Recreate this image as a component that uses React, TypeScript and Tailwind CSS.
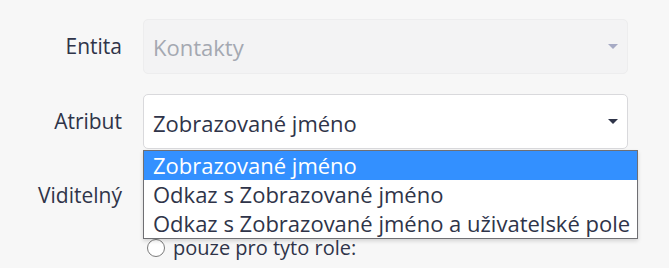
const options = [
  "Zobrazované jméno",
  "Odkaz s Zobrazované jméno",
  "Odkaz s Zobrazované jméno a uživatelské pole",
];

const Caret = ({ className }: { className: string }) => (
  <svg width="10" height="5" viewBox="0 0 10 5" className={className}>
    <path d="M0 0h10L5 5z" fill="currentColor" />
  </svg>
);

export default function App() {
  return (
    <div
      className="w-[669px] h-[268px] overflow-hidden bg-[#f7f7f7] text-[#2f3449] pt-[19px]"
      style={{ fontFamily: '"Open Sans", "Noto Sans", sans-serif' }}
    >
      {/* Entita */}
      <div className="flex items-center">
        <div className="w-[122px] text-right text-[21px]">Entita</div>
        <div className="ml-[21px] w-[485px] h-[55px] rounded-[5px] border border-[#ededee] bg-[#f3f3f4] flex items-center justify-between pl-[9px] pr-[9px]">
          <span className="text-[22px] text-[#a4a8b1] pt-[2px]">Kontakty</span>
          <Caret className="text-[#a6aac4]" />
        </div>
      </div>

      {/* Atribut */}
      <div className="flex items-center mt-[20px]">
        <div className="w-[122px] text-right text-[21px]">Atribut</div>
        <div className="relative ml-[21px]">
          <div className="w-[485px] h-[55px] rounded-[5px] border border-[#d9d9dc] bg-white flex items-center justify-between pl-[9px] pr-[9px]">
            <span className="text-[22px] pt-[4px]">Zobrazované jméno</span>
            <Caret className="text-[#2f3449]" />
          </div>
          <ul className="absolute z-10 left-0 top-[56px] w-[495px] border border-[#6f6f73] bg-white shadow-[0_2px_4px_rgba(0,0,0,0.15)]">
            {options.map((o, i) => (
              <li
                key={o}
                className={
                  i === 0
                    ? "h-[29px] leading-[29px] pl-[9px] text-[22px] bg-[#3390ff] text-white"
                    : "h-[29px] leading-[29px] pl-[9px] text-[22px]"
                }
              >
                {o}
              </li>
            ))}
          </ul>
        </div>
      </div>

      {/* Viditelný */}
      <div className="flex mt-[31px]">
        <div className="w-[122px] text-right text-[21px] leading-[30px]">Viditelný</div>
        <div className="ml-[25px] pt-[57px]">
          <label className="flex items-center gap-[8px] text-[20px] leading-[22px]">
            <span className="w-[18px] h-[18px] rounded-full border border-[#7a7a7a] bg-white" />
            pouze pro tyto role:
          </label>
        </div>
      </div>
    </div>
  );
}
